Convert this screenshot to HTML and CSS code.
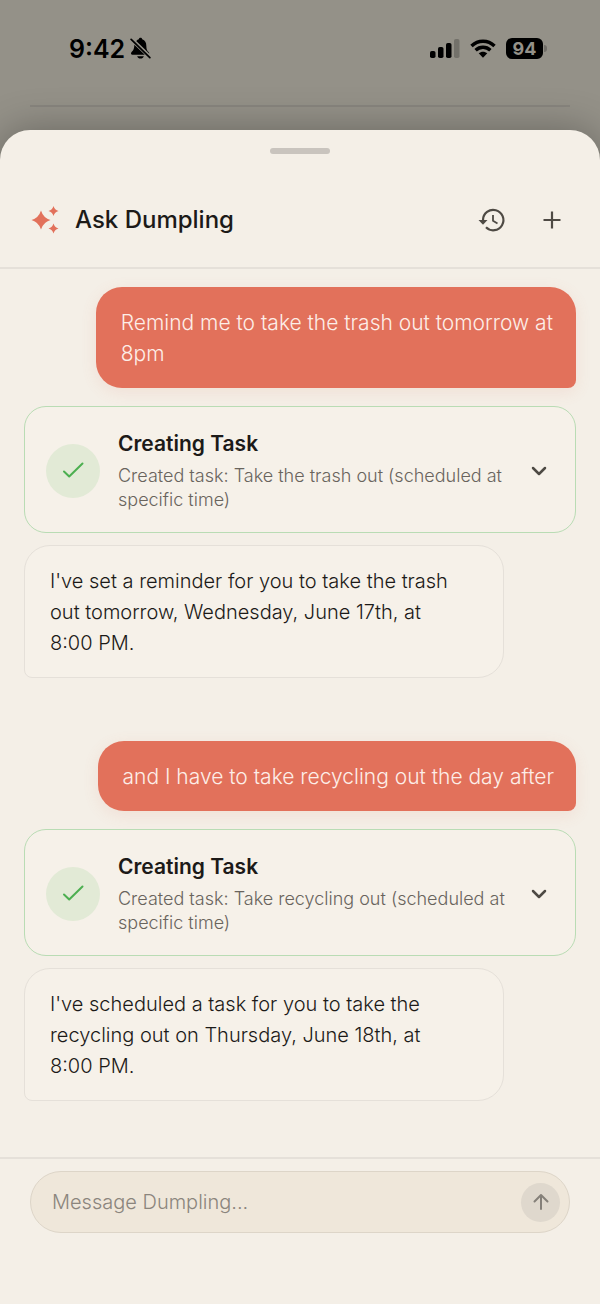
FILE: index.html
```html
<!DOCTYPE html>
<html lang="en">
<head>
<meta charset="UTF-8">
<meta name="viewport" content="width=device-width, initial-scale=1.0">
<title>Ask Dumpling</title>
<link rel="stylesheet" href="styles.css">
</head>
<body>
  <div class="backdrop">
    <div class="status-bar">
      <span class="time">9:42</span>
      <svg class="bell" width="21" height="23" viewBox="0 0 22 24">
        <path d="M6.5 4.2C7.5 2.9 8.400 2.500 9.200 2.200C9.500 1.200 10.200.8 11 .8s1.500.4 1.800 1.400c3 1 4.300 3.500 4.300 6.800 0 4 1 5.300 2.600 6.800.5.500.5 1 .4 1.500z"/>
        <path d="M4.500 8.200L15.500 18.500H2.500C1 18.500.6 17 1.500 16c1.800-1.700 3-3.300 3-7.800zM7.500 20h7c-.5 1.600-1.900 2.500-3.500 2.500S8 21.600 7.500 20z"/>
        <path d="M1.200 2.500L20.800 21.500" fill="none" stroke="#000" stroke-width="1.800" stroke-linecap="round"/>
      </svg>
      <div class="status-icons">
        <svg width="30" height="20" viewBox="0 0 30 20">
          <rect x="0" y="12" width="5.500" height="7" rx="1.800"/>
          <rect x="8" y="8" width="5.500" height="11" rx="1.800"/>
          <rect x="16" y="4" width="5.500" height="15" rx="1.800"/>
          <rect x="24" y="0" width="5.500" height="19" rx="1.800" opacity=".22"/>
        </svg>
        <svg width="26" height="20" viewBox="0 0 26 20">
          <g fill="none" stroke="#000" stroke-width="3.400">
            <path d="M1.500 7C8 .6 18 .6 24.500 7"/>
            <path d="M5.600 11.200c4.200-4 10.600-4 14.800 0"/>
          </g>
          <path d="M8.700 14.300c2.500-2.200 6.100-2.200 8.600 0L13 18.800z"/>
        </svg>
        <div class="battery"><span class="battery-level">94</span></div>
      </div>
    </div>
    <hr class="backdrop-line">
  </div>

  <main class="sheet">
    <div class="handle"></div>
    <header class="header">
      <svg class="sparkles" width="28" height="28" viewBox="0 0 28 28">
        <path d="M10 4.500Q12.200 11.800 19.500 14Q12.200 16.200 10 23.500Q7.800 16.200.5 14Q7.800 11.800 10 4.500z"/>
        <path d="M22.500 0Q23.600 3.900 27.500 5Q23.600 6.100 22.500 10Q21.400 6.100 17.500 5Q21.400 3.900 22.500 0z"/>
        <path d="M22.500 17.500Q23.600 21.400 27.500 22.500Q23.600 23.600 22.500 27.500Q21.400 23.600 17.500 22.500Q21.400 21.400 22.500 17.500z"/>
      </svg>
      <h1>Ask Dumpling</h1>
      <button class="icon-button" aria-label="History">
        <svg width="28" height="28" viewBox="0 0 28 28">
          <path d="M5 14A10.200 10.200 0 1 1 8 21.300" fill="none" stroke="#4e4a44" stroke-width="2.200"/>
          <path d="M.5 14h9L5 18.700z" fill="#4e4a44"/>
          <path d="M15 9v5.800l4.500 2.700" fill="none" stroke="#4e4a44" stroke-width="1.800"/>
        </svg>
      </button>
      <button class="icon-button" aria-label="New chat">
        <svg width="28" height="28" viewBox="0 0 28 28">
          <path d="M14 5.500v17M5.500 14h17" fill="none" stroke="#4e4a44" stroke-width="2.200"/>
        </svg>
      </button>
    </header>

    <div class="chat">
      <section class="exchange">
        <div class="bubble user">Remind me to take the trash out tomorrow at 8pm</div>
        <div class="task">
          <div class="task-status">
            <svg width="26" height="26" viewBox="0 0 26 26"><path d="M4 13.500L9.200 18.500L22.500 5.500"/></svg>
          </div>
          <div class="task-text">
            <h2>Creating Task</h2>
            <p>Created task: Take the trash out (scheduled at specific time)</p>
          </div>
          <button class="expand" aria-label="Show details">
            <svg width="28" height="28" viewBox="0 0 28 28"><path d="M7 11l6 6 6-6"/></svg>
          </button>
        </div>
        <div class="bubble reply">I've set a reminder for you to take the trash out tomorrow, Wednesday, June 17th, at 8:00 PM.</div>
      </section>

      <section class="exchange">
        <div class="bubble user">and I have to take recycling out the day after</div>
        <div class="task">
          <div class="task-status">
            <svg width="26" height="26" viewBox="0 0 26 26"><path d="M4 13.500L9.200 18.500L22.500 5.500"/></svg>
          </div>
          <div class="task-text">
            <h2>Creating Task</h2>
            <p>Created task: Take recycling out (scheduled at specific time)</p>
          </div>
          <button class="expand" aria-label="Show details">
            <svg width="28" height="28" viewBox="0 0 28 28"><path d="M7 11l6 6 6-6"/></svg>
          </button>
        </div>
        <div class="bubble reply">I've scheduled a task for you to take the recycling out on Thursday, June 18th, at 8:00 PM.</div>
      </section>
    </div>

    <form class="composer">
      <div class="message-box">
        <input type="text" placeholder="Message Dumpling..." aria-label="Message Dumpling">
        <button type="button" class="send" aria-label="Send">
          <svg width="20" height="20" viewBox="0 0 20 20"><path d="M10 17V3.500M3.500 9.500L10 3L16.500 9.500"/></svg>
        </button>
      </div>
    </form>
  </main>
</body>
</html>
```
FILE: styles.css
```css
:root {
  --sheet: #f4efe7;
  --card: #f6f1e9;
  --accent: #e2715b;
  --text: #1c1a18;
  --muted: #69645d;
  --icon: #4e4a44;
  --line: #e5e0d9;
}

* {
  box-sizing: border-box;
}

body {
  margin: 0;
  min-height: 100vh;
  display: flex;
  flex-direction: column;
  background: #949188;
  color: var(--text);
  font-family: Inter, "Liberation Sans", sans-serif;
}

button {
  border: none;
  background: none;
  padding: 0;
  cursor: pointer;
}

svg {
  display: block;
}

.status-bar {
  display: flex;
  align-items: center;
  height: 97px;
  padding: 0 53px 0 69px;
  color: #000;
}

.time {
  font-size: 25px;
  font-weight: 600;
}

.bell {
  margin-left: 5px;
}

.status-icons {
  display: flex;
  align-items: center;
  gap: 10px;
  margin-left: auto;
}

.battery {
  display: flex;
  align-items: center;
  gap: 1px;
}

.battery::after {
  content: '';
  width: 3px;
  height: 7px;
  border-radius: 0 3px 3px 0;
  background: #716e68;
}

.battery-level {
  width: 37px;
  background: #000;
  color: #949188;
  border-radius: 6px;
  font-size: 18px;
  font-weight: 700;
  line-height: 21px;
  text-align: center;
}

.backdrop-line {
  height: 2px;
  margin: 8px 30px 23px;
  border: none;
  background: #88857e;
}

/* bottom sheet */
.sheet {
  flex: 1;
  display: flex;
  flex-direction: column;
  background: var(--sheet);
  border-radius: 30px 30px 0 0;
  box-shadow: 0 0 40px rgba(0, 0, 0, 0.3);
}

.handle {
  width: 60px;
  height: 6px;
  margin: 18px auto 0;
  border-radius: 3px;
  background: #c9c4be;
}

.header {
  display: flex;
  align-items: center;
  gap: 16px;
  margin-top: 18px;
  height: 97px;
  padding: 0 34px 0 31px;
  border-bottom: 2px solid var(--line);
}

.sparkles {
  fill: var(--accent);
}

.header h1 {
  flex: 1;
  margin: 0;
  font-size: 24px;
  font-weight: 500;
}

.icon-button + .icon-button {
  margin-left: 16px;
}

.chat {
  flex: 1;
  display: flex;
  flex-direction: column;
  gap: 63px;
  padding: 18px 24px 56px;
}

.exchange {
  display: flex;
  flex-direction: column;
}

.bubble {
  max-width: 87%;
  border-radius: 26px;
  font-weight: 300;
  line-height: 31px;
}

.user {
  align-self: flex-end;
  padding: 20px 22px 19px 25px;
  background: var(--accent);
  color: #fdeee8;
  border-bottom-right-radius: 8px;
  box-shadow: 0 4px 16px rgba(226, 113, 91, 0.12);
  font-size: 21px;
}

.reply {
  align-self: flex-start;
  margin-top: 12px;
  padding: 20px 40px 18px 25px;
  width: 87%;
  background: var(--card);
  border: 1px solid var(--line);
  border-bottom-left-radius: 8px;
  font-size: 20px;
}

.task {
  display: flex;
  align-items: center;
  margin-top: 18px;
  padding: 22px 21px 20px;
  background: var(--card);
  border: 1px solid #b9dcb4;
  border-radius: 22px;
}

.task-status {
  flex: none;
  display: grid;
  place-items: center;
  width: 54px;
  height: 54px;
  border-radius: 50%;
  background: #e2ead6;
}

.task-status path {
  fill: none;
  stroke: #4caf50;
  stroke-width: 2;
  stroke-linecap: round;
  stroke-linejoin: round;
}

.task-text {
  flex: 1;
  margin: 0 12px 0 18px;
}

.task h2 {
  margin: 0 0 6px;
  font-size: 21px;
  font-weight: 600;
  line-height: 29px;
}

.task p {
  margin: 0;
  color: var(--muted);
  font-size: 18px;
  font-weight: 300;
  line-height: 24px;
}

.expand path {
  fill: none;
  stroke: var(--icon);
  stroke-width: 2.5;
  stroke-linecap: round;
  stroke-linejoin: round;
}

.composer {
  padding: 12px 30px 72px;
  border-top: 2px solid var(--line);
}

.message-box {
  display: flex;
  align-items: center;
  height: 62px;
  padding: 0 9px 0 21px;
  background: #efe7da;
  border: 1px solid #ddd5c8;
  border-radius: 31px;
}

.message-box input {
  flex: 1;
  min-width: 0;
  padding: 0;
  border: none;
  outline: none;
  background: none;
  color: var(--text);
  font-family: inherit;
  font-size: 20px;
  font-weight: 300;
}

.message-box input::placeholder {
  color: #8b857d;
}

.send {
  display: grid;
  place-items: center;
  width: 39px;
  height: 39px;
  border-radius: 50%;
  background: #dfd8cd;
}

.send path {
  fill: none;
  stroke: #858079;
  stroke-width: 2;
  stroke-linecap: round;
  stroke-linejoin: round;
}
```
